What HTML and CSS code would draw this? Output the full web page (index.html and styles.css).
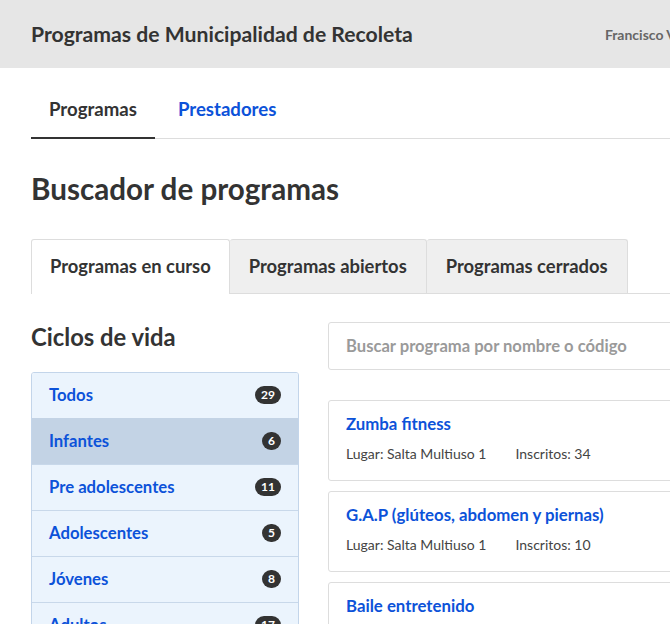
FILE: index.html
```
<!DOCTYPE html>
<html lang="es">
<head>
<meta charset="utf-8">
<title>Programas de Municipalidad de Recoleta</title>
<link rel="stylesheet" href="styles.css">
</head>
<body>
<div class="page">
  <header class="topbar">
    <div class="brand">Programas de Municipalidad de Recoleta</div>
    <div class="user">Francisco Valenzuela</div>
  </header>
  <nav class="mainnav">
    <a class="navitem active">Programas</a>
    <a class="navitem">Prestadores</a>
  </nav>
  <h1 class="title">Buscador de programas</h1>
  <div class="tabs">
    <div class="tab active">Programas en curso</div>
    <div class="tab">Programas abiertos</div>
    <div class="tab">Programas cerrados</div>
  </div>
  <div class="content">
    <aside class="side">
      <h2 class="sidetitle">Ciclos de vida</h2>
      <ul class="cycles">
        <li class="cycle"><span>Todos</span><span class="badge">29</span></li>
        <li class="cycle active"><span>Infantes</span><span class="badge">6</span></li>
        <li class="cycle"><span>Pre adolescentes</span><span class="badge">11</span></li>
        <li class="cycle"><span>Adolescentes</span><span class="badge">5</span></li>
        <li class="cycle"><span>Jóvenes</span><span class="badge">8</span></li>
        <li class="cycle"><span>Adultos</span><span class="badge">17</span></li>
      </ul>
    </aside>
    <main class="main">
      <div class="search">Buscar programa por nombre o código</div>
      <div class="cards">
        <div class="card">
          <div class="cardtitle">Zumba fitness</div>
          <div class="meta"><span>Lugar: Salta Multiuso 1</span><span>Inscritos: 34</span></div>
        </div>
        <div class="card">
          <div class="cardtitle">G.A.P (glúteos, abdomen y piernas)</div>
          <div class="meta"><span>Lugar: Salta Multiuso 1</span><span>Inscritos: 10</span></div>
        </div>
        <div class="card">
          <div class="cardtitle">Baile entretenido</div>
          <div class="meta"><span>Lugar: Salta Multiuso 1</span><span>Inscritos: 21</span></div>
        </div>
      </div>
    </main>
  </div>
</div>
</body>
</html>
```
FILE: styles.css
```
html, body {
  margin: 0;
  padding: 0;
  overflow: hidden;
  background: #fff;
}
body {
  font-family: "Lato", "Open Sans", sans-serif;
  color: #333;
}
.page {
  width: 1000px;
}
.topbar {
  height: 68px;
  background: #e6e6e6;
  display: flex;
  align-items: center;
  padding: 0 31px;
}
.brand {
  font-size: 21.2px;
  font-weight: 700;
  color: #333;
}
.user {
  margin-left: 192px;
  font-size: 14px;
  font-weight: 700;
  color: #666;
}
.mainnav {
  display: flex;
  gap: 5px;
  margin: 14px 0 0 31px;
  border-bottom: 1px solid #ddd;
}
.navitem {
  padding: 15px 18px 16px;
  font-size: 18.6px;
  font-weight: 700;
  line-height: 24px;
  color: #0c52d9;
  border-bottom: 2px solid transparent;
  margin-bottom: -1px;
}
.navitem.active {
  color: #333;
  border-bottom-color: #333;
}
.title {
  margin: 32px 0 0 31px;
  font-size: 29.6px;
  line-height: 36px;
  font-weight: 700;
  color: #333;
}
.tabs {
  display: flex;
  margin: 32px 0 0 31px;
  border-bottom: 1px solid #ddd;
}
.tab {
  padding: 14px 19px 15px;
  font-size: 18.4px;
  line-height: 24px;
  font-weight: 700;
  color: #333;
  background: #efefef;
  border: 1px solid #ddd;
  border-bottom: none;
  border-left: none;
  border-radius: 3px 3px 0 0;
}
.tab.active {
  padding-left: 18px;
  padding-right: 18px;
  background: #fff;
  border-left: 1px solid #ddd;
  margin-bottom: -1px;
  padding-bottom: 16px;
}
.content {
  display: flex;
  gap: 29px;
  margin: 28px 0 0 31px;
}
.side {
  width: 268px;
  flex: none;
}
.sidetitle {
  margin: 1px 0 0;
  font-size: 23.8px;
  line-height: 28px;
  font-weight: 700;
  color: #333;
}
.cycles {
  list-style: none;
  margin: 21px 0 0;
  padding: 0;
  border: 1px solid #c3d5ea;
  border-radius: 3px;
  overflow: hidden;
}
.cycle {
  display: flex;
  justify-content: space-between;
  align-items: center;
  padding: 0 17px 2px 17px;
  box-sizing: border-box;
  height: 46px;
  background: #ebf4fd;
  border-top: 1px solid #c8d8ea;
  font-size: 16.7px;
  font-weight: 700;
  color: #0c52d9;
}
.cycle:first-child {
  border-top: none;
  height: 45px;
}
.cycle.active {
  background: #c3d3e5;
  border-top-color: #c3d3e5;
}
.badge {
  background: #333;
  color: #fff;
  font-size: 12px;
  font-weight: 700;
  height: 18px;
  line-height: 18px;
  min-width: 18px;
  box-sizing: border-box;
  text-align: center;
  padding: 0 6px;
  border-radius: 9px;
}
.main {
  flex: 1;
}
.search {
  height: 48px;
  box-sizing: border-box;
  border: 1px solid #ddd;
  border-radius: 3px;
  padding: 0 17px;
  display: flex;
  align-items: center;
  font-size: 16.6px;
  font-weight: 700;
  color: #9a9a9a;
}
.cards {
  margin-top: 30px;
  display: flex;
  flex-direction: column;
  gap: 10px;
}
.card {
  height: 81px;
  box-sizing: border-box;
  border: 1px solid #ddd;
  border-radius: 3px;
  padding: 12px 17px 0;
}
.cardtitle {
  font-size: 16.8px;
  line-height: 22px;
  font-weight: 700;
  color: #0c52d9;
}
.meta {
  margin-top: 10px;
  display: flex;
  gap: 29px;
  font-size: 14px;
  line-height: 18px;
  color: #444;
}
```
